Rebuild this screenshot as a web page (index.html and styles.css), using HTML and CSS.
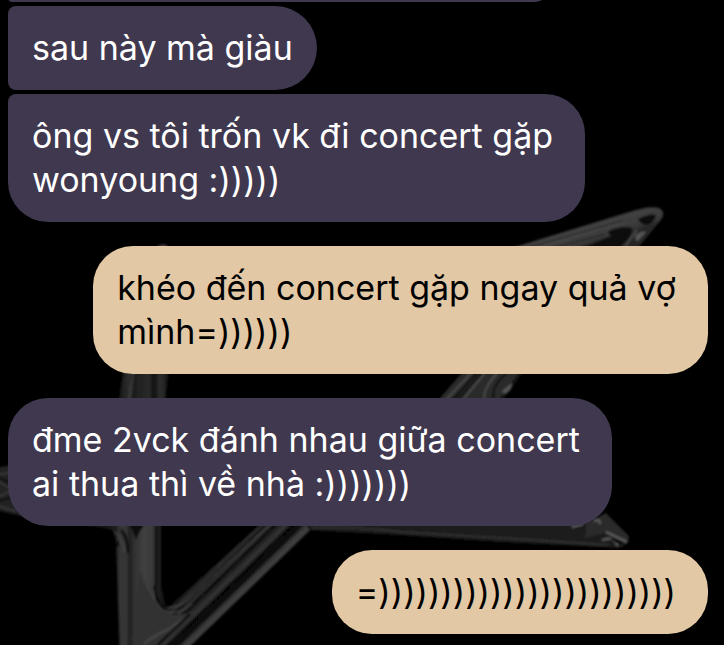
FILE: index.html
```html
<!DOCTYPE html>
<html lang="vi">
<head>
<meta charset="utf-8">
<meta name="viewport" content="width=device-width, initial-scale=1">
<title>Chat</title>
<link rel="stylesheet" href="styles.css">
</head>
<body>
<svg class="wallpaper" viewBox="0 0 724 645" preserveAspectRatio="xMidYMid slice" aria-hidden="true">
  <defs>
    <linearGradient id="column" x1="116" y1="0" x2="163" y2="0" gradientUnits="userSpaceOnUse">
      <stop offset="0" stop-color="#1c1c1c"/>
      <stop offset=".06" stop-color="#353535"/>
      <stop offset=".22" stop-color="#343434"/>
      <stop offset=".3" stop-color="#202020"/>
      <stop offset=".38" stop-color="#303030"/>
      <stop offset=".6" stop-color="#404040"/>
      <stop offset=".8" stop-color="#383838"/>
      <stop offset=".85" stop-color="#0c0c0c"/>
      <stop offset=".9" stop-color="#242424"/>
      <stop offset="1" stop-color="#141414"/>
    </linearGradient>
    <linearGradient id="diagonal" x1="211" y1="568" x2="243" y2="601" gradientUnits="userSpaceOnUse">
      <stop offset="0" stop-color="#151515"/>
      <stop offset=".1" stop-color="#303030"/>
      <stop offset=".17" stop-color="#0a0a0a"/>
      <stop offset=".23" stop-color="#383838"/>
      <stop offset=".28" stop-color="#080808"/>
      <stop offset=".38" stop-color="#242424"/>
      <stop offset=".48" stop-color="#363636"/>
      <stop offset=".57" stop-color="#060606"/>
      <stop offset=".69" stop-color="#080808"/>
      <stop offset=".78" stop-color="#383838"/>
      <stop offset=".93" stop-color="#454545"/>
      <stop offset="1" stop-color="#202020"/>
    </linearGradient>
    <linearGradient id="upper" x1="119" y1="0" x2="168" y2="0" gradientUnits="userSpaceOnUse">
      <stop offset="0" stop-color="#151515"/>
      <stop offset=".22" stop-color="#303030"/>
      <stop offset=".3" stop-color="#1c1c1c"/>
      <stop offset=".6" stop-color="#2a2a2a"/>
      <stop offset=".72" stop-color="#101010"/>
      <stop offset=".84" stop-color="#303030"/>
      <stop offset="1" stop-color="#161616"/>
    </linearGradient>
    <linearGradient id="tip" x1="575" y1="220" x2="584" y2="248" gradientUnits="userSpaceOnUse">
      <stop offset="0" stop-color="#2a2a2a"/>
      <stop offset=".3" stop-color="#424242"/>
      <stop offset=".8" stop-color="#3a3a3a"/>
      <stop offset="1" stop-color="#262626"/>
    </linearGradient>
    <filter id="soft"><feGaussianBlur stdDeviation="1"/></filter>
  </defs>
  <g filter="url(#soft)" fill="none">
    <path fill="#40303a" d="M154 250Q163 238 171 250Z"/>
    <path fill="url(#upper)" d="M125 360H170L164 410H117Z"/>
    <path stroke="#464646" d="M134 372L129 400"/>

    <path fill="url(#tip)" d="M505 250L626 213Q650 205 659 208Q667 212 660 221L628 260H505Z"/>
    <path stroke="#1c1c1c" d="M530 247L605 226Q616 222 624 221M556 247L605 234"/>
    <path stroke="#505050" d="M540 247L600 229L626 222"/>
    <path fill="#0c0c0c" d="M582 248Q600 240 612 236Q602 231 618 228Q631 225 632 229Q632 238 618 248ZM638 219Q650 213 656 215Q655 221 648 225Q640 225 638 219Z"/>
    <path stroke="#4a4a4a" stroke-width="2" d="M625 247Q630 239 637 230"/>
    <path fill="#555" d="M635 236Q642 230 646 232L637 242Z"/>

    <path fill="#2c2c2c" d="M468 366H527L492 414H426Z"/>
    <path stroke="#484848" stroke-width="2" d="M474 370L444 402M487 370L461 402M497 373Q481 392 485 400"/>
    <path stroke="#0a0a0a" stroke-width="2" d="M478 372L451 402M483 372L456 402M507 373Q490 386 494 401M520 373L500 400"/>
    <path fill="#555" d="M502 391L512 383Q513 391 504 394Z"/>

    <path fill="#242424" d="M-4 468L16 464L30 518L-4 510Z"/>
    <path stroke="#484848" d="M-2 474Q5 475 12 471M-2 481L12 490L-2 497M-2 506L16 511"/>
    <path stroke="#101010" stroke-width="2" d="M-2 478L14 484M-2 501L14 497"/>

    <path fill="#171717" d="M82 521L119 522V533Q107 527 82 525Z"/>
    <path fill="url(#column)" d="M108 520H161L162 585Q163 602 169 612L190 616L184 660H120L116 540Z"/>
    <path fill="url(#diagonal)" d="M164 611L267 518H326L309 531L184 652H147Z"/>
    <path fill="#323232" d="M140 570Q150 602 164 612Q179 618 194 610L176 634L144 652L132 640Z"/>
    <path stroke="#080808" stroke-width="2" d="M154 586Q157 600 164 608M115 542Q119 550 118 541M161 528V591"/>
    <path stroke="#505050" d="M153 594Q155 606 164 611Q180 616 192 604M115 532Q121 537 125 552M167 608Q180 607 188 600L271 523"/>
    <path stroke="#484848" stroke-width="2" d="M144 644Q153 636 169 629L184 618"/>
    <path stroke="#111" stroke-width="3" d="M121 530Q128 538 128 553M158 645L190 614"/>
    <path fill="#0c0c0c" d="M129 524H145Q140 530 136 540Q134 532 129 524Z"/>

    <path fill="#1c1c1c" d="M303 520H609L629 536Q630 546 618 548L500 542L398 535L309 530Z"/>
    <path stroke="#303030" stroke-width="2" d="M312 528Q350 526 402 532L500 538L608 545"/>
    <path fill="#292929" d="M586 523L606 513L629 536L627 544L609 532L585 538Z"/>
    <path stroke="#606060" stroke-width="2" d="M594 521Q600 518 600 524M606 532L627 542M602 540L612 538L618 546M572 527L583 524"/>
    <path fill="#050505" d="M608 535L626 544L616 543Z"/>
  </g>
</svg>
<main class="chat">
  <p class="bubble received cut" aria-hidden="true"></p>
  <p class="bubble received first">sau này mà giàu</p>
  <p class="bubble received last">ông vs tôi trốn vk đi concert gặp<br>wonyoung :)))))</p>
  <p class="bubble sent">khéo đến concert gặp ngay quả vợ<br>mình=))))))</p>
  <p class="bubble received">đme 2vck đánh nhau giữa concert<br>ai thua thì về nhà :)))))))</p>
  <p class="bubble sent">=))))))))))))))))))))))))</p>
</main>
</body>
</html>
```
FILE: styles.css
```css
* { box-sizing: border-box; }
body {
  margin: 0;
  background: #000;
  font-family: Inter, "Liberation Sans", sans-serif;
  font-size: 34px;
  line-height: 44px;
  overflow: hidden;
}
.wallpaper {
  position: absolute;
  inset: 0;
  width: 100%;
  height: 100%;
}
.chat {
  position: relative;
  display: flex;
  flex-direction: column;
  gap: 24px;
  padding: 0 16px 11px 8px;
}
.bubble {
  margin: 0;
  padding: 20px 32px 20px 24px;
  border-radius: 40px;
  max-width: 90%;
  white-space: nowrap;
}
.received {
  align-self: flex-start;
  background: #3f384f;
  color: #fff;
}
.sent {
  align-self: flex-end;
  background: #e2c8a4;
  color: #000;
}
.cut {
  width: 78%;
  height: 42px;
  margin-top: -40px;
  margin-bottom: -20px;
  border-radius: 8px 40px 40px 8px;
}
.first {
  margin-bottom: -20px;
  padding-right: 24px;
  border-radius: 8px 42px 42px 8px;
}
.last { border-radius: 8px 40px 40px 40px; }
```
